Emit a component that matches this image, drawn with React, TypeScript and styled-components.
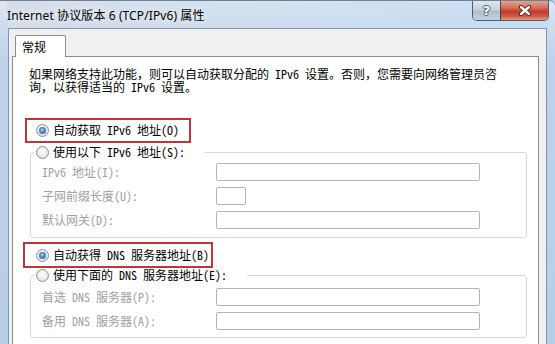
import styled, { createGlobalStyle } from 'styled-components'

const GlobalStyle = createGlobalStyle`
  html, body {
    margin: 0;
    padding: 0;
  }
  body {
    width: 555px;
    height: 344px;
    overflow: hidden;
    background: #bcd2ea;
  }
`

const Window = styled.div`
  width: 555px;
  height: 344px;
  box-sizing: border-box;
  display: flex;
  flex-direction: column;
  padding: 0 8px 0 8px;
  border-top: 1px solid #6d7f93;
  border-top-right-radius: 6px;
  background: linear-gradient(180deg, #dfe8f2 0, #cfdced 24px, #bed3ea 60px, #b7cee7 100%);
  overflow: hidden;
`

const TitleBar = styled.div`
  height: 27px;
  display: flex;
  align-items: flex-start;
  margin: 0 -1px 0 -1px;
  background: linear-gradient(90deg, rgba(214, 222, 232, 0.9) 0, rgba(205, 222, 240, 0.6) 55%, rgba(196, 220, 244, 0.7) 100%);
`

const Title = styled.div`
  padding: 7px 0 0 0;
  font-family: 'Noto Sans', 'Noto Sans CJK SC', sans-serif;
  font-size: 12px;
  line-height: 15px;
  letter-spacing: 0.1px;
  color: #000;
  text-shadow: 0 0 6px rgba(255, 255, 255, 0.9);
`

const Buttons = styled.div`
  margin-left: auto;
  margin-right: -1px;
  display: flex;
  height: 19px;
  border: 1px solid #4d5e73;
  border-top: none;
  border-radius: 0 0 5px 5px;
  overflow: hidden;
`

const CaptionButton = styled.div<{ $close?: boolean }>`
  width: ${p => (p.$close ? 47 : 27)}px;
  display: flex;
  align-items: center;
  justify-content: center;
  background: ${p =>
    p.$close
      ? 'linear-gradient(180deg, #e3a394 0, #d5705c 35%, #c43a28 55%, #cf5b43 80%, #e09a7f 100%)'
      : 'linear-gradient(180deg, #dfe6ee 0, #c5d1de 45%, #aebdcf 55%, #c4d3e4 100%)'};
  border-left: ${p => (p.$close ? '1px solid #5a3a3a' : 'none')};
  font-family: 'DejaVu Sans', sans-serif;
  font-weight: bold;
  font-size: 13px;
  color: #fff;
  text-shadow: -1px 0 #4f5f72, 1px 0 #4f5f72, 0 -1px #4f5f72, 0 1px #4f5f72;
`

const Client = styled.div`
  flex: 1;
  display: flex;
  flex-direction: column;
  min-height: 0;
  border: 1px solid #8396ab;
  border-bottom: none;
  background: #f0f0f0;
  padding: 6px 7px 0 3px;
`

const Tab = styled.div`
  position: relative;
  z-index: 1;
  width: 51px;
  height: 22px;
  box-sizing: border-box;
  margin: 0 0 -1px 3px;
  padding-left: 6px;
  border: 1px solid #898c95;
  border-bottom: none;
  border-radius: 2px 2px 0 0;
  background: #fff;
  font-family: 'Noto Sans CJK SC', sans-serif;
  font-size: 12px;
  line-height: 21px;
  color: #000;
`

const Panel = styled.div`
  flex: 1;
  border: 1px solid #898c95;
  border-bottom: none;
  background: #fff;
  padding: 10px 0 0 16px;
  font-family: 'Noto Sans Mono CJK SC', 'Liberation Mono', 'Noto Sans CJK SC', monospace;
  font-size: 12px;
  color: #000;
`

const Intro = styled.p`
  margin: 0;
  line-height: 13px;
  white-space: nowrap;
`

const RadioRow = styled.div<{ $gap?: number; $box?: { top: number; left: number; width: number; height: number } }>`
  position: relative;
  display: flex;
  width: fit-content;
  align-items: center;
  gap: 4px;
  height: 14px;
  margin: ${p => p.$gap ?? 0}px 0 0 7px;
  line-height: 14px;
  white-space: nowrap;

  ${p =>
    p.$box
      ? `
    &::before {
      content: '';
      position: absolute;
      top: ${p.$box.top}px;
      left: ${p.$box.left}px;
      width: ${p.$box.width}px;
      height: ${p.$box.height}px;
      box-sizing: border-box;
      border: 2px solid #be353b;
      pointer-events: none;
    }
  `
      : ''}
`

const Radio = styled.span<{ $checked?: boolean }>`
  position: relative;
  flex: none;
  width: 13px;
  height: 13px;
  box-sizing: border-box;
  border-radius: 50%;
  border: 1px solid #8e9296;
  background: radial-gradient(circle at 50% 40%, #ffffff 0, #eeeeee 45%, #d3d6d9 100%);

  &::after {
    content: '';
    position: absolute;
    left: 2px;
    top: 2px;
    width: 7px;
    height: 7px;
    border-radius: 50%;
    display: ${p => (p.$checked ? 'block' : 'none')};
    background: radial-gradient(circle at 45% 40%, #b6d8f7 0, #3f8ad6 40%, #1b4f8e 100%);
    box-shadow: 0 0 0 1px #6d8fb0 inset;
  }
`

const GroupBox = styled.fieldset<{ $gap: number; $top: number; $bottom: number }>`
  margin: ${p => p.$gap}px 0 0 1px;
  width: 497px;
  box-sizing: border-box;
  border: 1px solid #d5d9dd;
  border-radius: 3px;
  padding: ${p => p.$top}px 0 ${p => p.$bottom}px 0;
  min-inline-size: 0;
`

const Legend = styled.legend`
  margin-left: 3px;
  padding: 0 20px 0 2px;
  height: 14px;
`

const LegendRow = styled.div`
  display: flex;
  align-items: center;
  gap: 4px;
  height: 14px;
  line-height: 14px;
  white-space: nowrap;
`

const FieldGrid = styled.div`
  display: grid;
  grid-template-columns: 174px auto;
  justify-content: start;
  row-gap: 6px;
  padding-left: 11px;
`

const FieldLabel = styled.span`
  align-self: center;
  color: #a0a0a0;
  line-height: 14px;
  white-space: nowrap;
`

const Field = styled.div<{ $narrow?: boolean }>`
  width: ${p => (p.$narrow ? 30 : 264)}px;
  height: 18px;
  box-sizing: border-box;
  border: 1px solid #b4b4b4;
  border-radius: 2px;
  background: #fff;
`

const ipv6Fields = [
  { label: 'IPv6 地址(I):', narrow: false },
  { label: '子网前缀长度(U):', narrow: true },
  { label: '默认网关(D):', narrow: false },
]

const dnsFields = [
  { label: '首选 DNS 服务器(P):', narrow: false },
  { label: '备用 DNS 服务器(A):', narrow: false },
]

function CloseGlyph() {
  return (
    <svg width="14" height="11" viewBox="0 0 14 11">
      <path d="M3 2 L11 9 M11 2 L3 9" stroke="#4a1e18" strokeWidth="4.2" strokeLinecap="round" />
      <path d="M3 2 L11 9 M11 2 L3 9" stroke="#fff" strokeWidth="2.4" strokeLinecap="round" />
    </svg>
  )
}

export default function App() {
  return (
    <>
      <GlobalStyle />
      <Window>
        <TitleBar>
          <Title>Internet 协议版本 6 (TCP/IPv6) 属性</Title>
          <Buttons>
            <CaptionButton>?</CaptionButton>
            <CaptionButton $close>
              <CloseGlyph />
            </CaptionButton>
          </Buttons>
        </TitleBar>
        <Client>
          <Tab>常规</Tab>
          <Panel>
            <Intro>
              如果网络支持此功能，则可以自动获取分配的 IPv6 设置。否则，您需要向网络管理员咨
              <br />
              询，以获得适当的 IPv6 设置。
            </Intro>

            <RadioRow $gap={30} $box={{ top: -5, left: -11, width: 166, height: 25 }}>
              <Radio $checked />
              <span>自动获取 IPv6 地址(O)</span>
            </RadioRow>

            <GroupBox $gap={8} $top={4} $bottom={8}>
              <Legend>
                <LegendRow>
                  <Radio />
                  <span>使用以下 IPv6 地址(S):</span>
                </LegendRow>
              </Legend>
              <FieldGrid>
                {ipv6Fields.map(f => (
                  <>
                    <FieldLabel key={f.label}>{f.label}</FieldLabel>
                    <Field key={f.label + '-f'} $narrow={f.narrow} />
                  </>
                ))}
              </FieldGrid>
            </GroupBox>

            <RadioRow $gap={10} $box={{ top: -6, left: -13, width: 190, height: 26 }}>
              <Radio $checked />
              <span>自动获得 DNS 服务器地址(B)</span>
            </RadioRow>

            <GroupBox $gap={6} $top={6} $bottom={7}>
              <Legend>
                <LegendRow>
                  <Radio />
                  <span>使用下面的 DNS 服务器地址(E):</span>
                </LegendRow>
              </Legend>
              <FieldGrid>
                {dnsFields.map(f => (
                  <>
                    <FieldLabel key={f.label}>{f.label}</FieldLabel>
                    <Field key={f.label + '-f'} $narrow={f.narrow} />
                  </>
                ))}
              </FieldGrid>
            </GroupBox>
          </Panel>
        </Client>
      </Window>
    </>
  )
}
